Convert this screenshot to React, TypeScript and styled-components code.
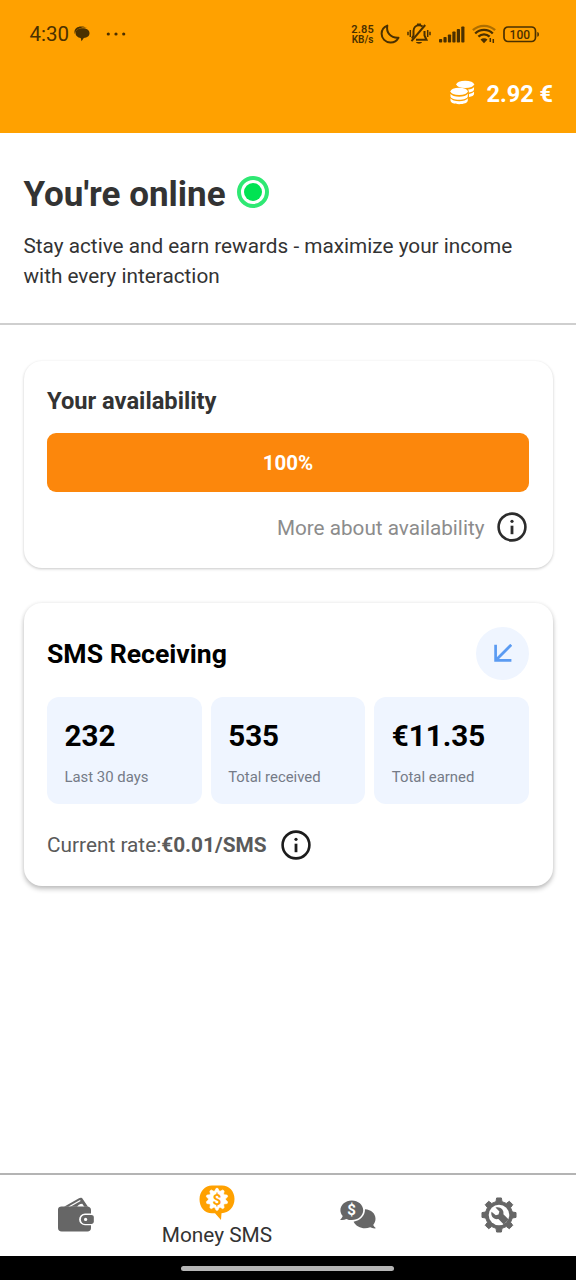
import React from "react";
import styled, { createGlobalStyle } from "styled-components";

const GlobalStyle = createGlobalStyle`
  *, *::before, *::after { box-sizing: border-box; }
  body {
    margin: 0;
    background: #fff;
    font-family: Roboto, "Liberation Sans", sans-serif;
    color: #333;
  }
  svg { display: block; flex: none; }
`;

const Screen = styled.div`
  display: flex;
  flex-direction: column;
  width: 576px;
  height: 1280px;
  overflow: hidden;
  background: #fff;
`;

const Header = styled.header`
  height: 133px;
  background: #ffa100;
`;

const StatusBar = styled.div`
  display: flex;
  justify-content: space-between;
  align-items: center;
  height: 68px;
  padding: 0 36px 0 29.5px;
  color: #4a3000;
`;

const StatusGroup = styled.div<{ $gap: number }>`
  display: flex;
  align-items: center;
  gap: ${(p) => p.$gap}px;
`;

const Clock = styled.span`
  font-size: 20.5px;
  line-height: 24px;
`;

const DotsSlot = styled.span`
  margin-left: 11px;
`;

const Speed = styled.span`
  display: flex;
  flex-direction: column;
  align-items: center;
  width: 23px;
  margin-right: -1px;
  padding-top: 2px;
  white-space: nowrap;
  font-weight: 600;
  line-height: 10px;
`;

const SpeedValue = styled.span`
  font-size: 11px;
  letter-spacing: 0.2px;
`;

const SpeedUnit = styled.span`
  font-size: 10px;
`;

const Balance = styled.div`
  display: flex;
  justify-content: flex-end;
  align-items: center;
  gap: 11px;
  height: 51px;
  padding-right: 23px;
  color: #fff;
  font-size: 23.5px;
  font-weight: 700;
  svg { margin-top: -3px; }
`;

const Intro = styled.section`
  height: 192px;
  padding: 41px 23.5px 0;
  border-bottom: 2px solid #cfcfcf;
`;

const TitleRow = styled.div`
  display: flex;
  align-items: center;
  gap: 11px;
  height: 41px;
`;

const Title = styled.h1`
  margin: 0;
  font-size: 35px;
  line-height: 41px;
  font-weight: 700;
`;

const OnlineDot = styled.span`
  display: grid;
  place-items: center;
  width: 32px;
  height: 32px;
  margin-top: -5px;
  border: 4px solid #2fe873;
  border-radius: 50%;
  &::after {
    content: "";
    width: 18px;
    height: 18px;
    border-radius: 50%;
    background: #00e352;
  }
`;

const Subtitle = styled.p`
  max-width: 510px;
  margin: 16px 0 0;
  font-size: 20.75px;
  line-height: 30px;
`;

const Content = styled.main`
  flex: 1;
  display: flex;
  flex-direction: column;
  gap: 35px;
  padding: 36px 23.5px 0;
`;

const Card = styled.section<{ $height: number; $raised?: boolean }>`
  height: ${(p) => p.$height}px;
  padding: 23.5px;
  border-radius: 18px;
  background: #fff;
  box-shadow: ${(p) =>
    p.$raised
      ? "0 3px 5px rgba(0,0,0,.24), 0 0 4px rgba(0,0,0,.07)"
      : "0 1px 3px rgba(0,0,0,.22)"};
`;

const CardTitle = styled.h2`
  margin: 0;
  font-size: 23.7px;
  line-height: 33px;
  font-weight: 700;
`;

const ProgressBar = styled.div`
  display: flex;
  align-items: center;
  justify-content: center;
  height: 59px;
  margin-top: 15px;
  padding-top: 2px;
  border-radius: 9px;
  background: #fc870c;
  color: #fff;
  font-size: 20.5px;
  font-weight: 700;
`;

const MoreRow = styled.div`
  display: flex;
  align-items: center;
  justify-content: flex-end;
  gap: 11px;
  margin-top: 19px;
  padding-right: 1.5px;
  font-size: 20.7px;
  line-height: 30px;
  color: #8c8c8c;
  span { padding-top: 2px; }
`;

const SectionHead = styled.div`
  display: flex;
  align-items: center;
  justify-content: space-between;
  height: 53px;
  color: #000;
`;

const SectionTitle = styled.h2`
  margin: 0;
  padding-top: 1px;
  font-size: 26.6px;
  font-weight: 700;
`;

const ArrowBadge = styled.div`
  display: grid;
  place-items: center;
  width: 53px;
  height: 53px;
  border-radius: 50%;
  background: #eff5ff;
`;

const Stats = styled.div`
  display: grid;
  grid-template-columns: repeat(3, 1fr);
  gap: 9px;
  margin-top: 17px;
`;

const Stat = styled.div`
  height: 107px;
  padding: 22px 17.5px 0;
  border-radius: 12px;
  background: #eff5ff;
`;

const StatValue = styled.div`
  color: #000;
  font-size: 29.6px;
  line-height: 34px;
  font-weight: 700;
`;

const StatLabel = styled.div`
  margin-top: 15px;
  color: #757b87;
  font-size: 14.9px;
  line-height: 18px;
`;

const RateRow = styled.div`
  display: flex;
  align-items: center;
  margin-top: 25px;
  color: #5a5a5a;
  font-size: 20.8px;
  line-height: 30px;
  span, strong { padding-top: 1px; }
  svg { margin-left: 13px; }
`;

const Nav = styled.nav`
  display: grid;
  grid-template-columns: repeat(4, 1fr);
  height: 83px;
  padding: 0 6px 2px 5px;
  border-top: 2px solid #b4b4b4;
  background: #fff;
`;

const NavItem = styled.div`
  display: flex;
  flex-direction: column;
  align-items: center;
  justify-content: center;
  color: #666;
`;

const NavLabel = styled.span`
  margin: 2px 0 -3px;
  color: #333;
  font-size: 20.8px;
  line-height: 26px;
`;

const GestureBar = styled.div`
  display: flex;
  justify-content: center;
  height: 24px;
  padding: 10px 1px 0 0;
  background: #000;
  &::after {
    content: "";
    width: 213px;
    height: 5px;
    border-radius: 3px;
    background: #b5b5b5;
  }
`;

/** Closed outline of a cog: `n` teeth between radius `r` and radius `R`. */
function cog(cx: number, cy: number, R: number, r: number, n: number, tip: number, base: number) {
  const pts: string[] = [];
  for (let i = 0; i < n; i++) {
    const a = (i * 2 * Math.PI) / n - Math.PI / 2;
    const corners: [number, number][] = [[-base, r], [-tip, R], [tip, R], [base, r]];
    for (const [d, rad] of corners) {
      pts.push(`${(cx + rad * Math.cos(a + d)).toFixed(2)} ${(cy + rad * Math.sin(a + d)).toFixed(2)}`);
    }
  }
  return `M${pts.join("L")}Z`;
}

const ChatIcon = () => (
  <svg width="16" height="16" viewBox="0 0 16 16" fill="currentColor">
    <path d="M.8 8C-.7 3.500 2.800.5 7 .5c3 0 5 .7 6 1.400C7 .8 1.800 3 .8 8Z" />
    <path d="M8.500 2.200c4 0 7 1.800 7 5 0 2.700-2.300 4.500-5.700 4.800L7.500 15.200 6.700 12C3.600 11.400 1.500 9.700 1.500 7.200c0-3.200 3-5 7-5Z" />
  </svg>
);

const DotsIcon = () => (
  <svg width="20" height="4" viewBox="0 0 20 4" fill="currentColor">
    <circle cx="2.300" cy="2" r="1.600" />
    <circle cx="10" cy="2" r="1.600" />
    <circle cx="17.700" cy="2" r="1.600" />
  </svg>
);

const MoonIcon = () => (
  <svg width="20" height="20" viewBox="0 0 20 20" fill="none" stroke="currentColor" strokeWidth="2" strokeLinejoin="round">
    <path d="M7.300 1.600C6 8.500 10.500 14.200 18.500 13.700 16.500 17.200 13.600 18.700 10.300 18.500 5.500 18.300 1.600 14.600 1.600 9.800 1.600 6 3.700 3 7.300 1.600Z" />
  </svg>
);

const MutedBellIcon = () => (
  <svg width="24" height="22" viewBox="0 0 24 22" fill="none" stroke="currentColor" strokeWidth="2">
    <path d="M5 15.500 6.500 12.500V8c0-3.400 2.300-5.700 5.500-5.700 1.400 0 2.700.5 3.600 1.300M17.500 8v4.500L19.500 16.800H9" />
    <path d="M4.500 18.200 18.200 2" />
    <path d="M3.300 7v7M20.700 7v7M1 8.700v3.500M23 8.700v3.500" strokeWidth="1.500" />
    <path d="M9 19h6c-.6 2.300-5.400 2.300-6 0Z" fill="currentColor" stroke="none" />
    <path d="M10 1.500h4" />
  </svg>
);

const SignalIcon = () => (
  <svg width="26" height="17" viewBox="0 0 26 17" fill="currentColor">
    {[3.5, 5.5, 8, 11, 13.5, 16].map((h, i) => (
      <rect key={h} x={i * 4.45} y={16.5 - h} width="3.200" height={h} rx=".8" />
    ))}
  </svg>
);

const WifiIcon = () => (
  <svg width="24" height="20" viewBox="0 0 24 20" fill="none" stroke="currentColor" strokeWidth="2.300">
    <path d="M.9 6.200C7 .3 17 .3 23.100 6.200" opacity=".45" />
    <path d="M3.200 9.500C8 4.600 16 4.600 20.800 9.500M6.400 12.700c3.300-3.200 7.900-3.200 11.200 0" />
    <path d="M8.500 15.600c2-1.700 5-1.700 7 0L12 19.200Z" fill="currentColor" stroke="none" />
    <path d="M18.300 14v4M21.300 15v4" strokeWidth="1.500" />
  </svg>
);

const BatteryIcon = () => (
  <svg width="37" height="17" viewBox="0 0 37 17">
    <rect x="1" y="1" width="31.500" height="14.500" rx="4" fill="none" stroke="currentColor" strokeWidth="1.700" />
    <path d="M34.300 6v4.800c2.200 0 2.200-4.800 0-4.800Z" fill="currentColor" />
    <text x="16.800" y="12.600" textAnchor="middle" fontFamily="Roboto, sans-serif" fontSize="12" fontWeight="500" fill="currentColor">
      100
    </text>
  </svg>
);

const CoinsIcon = () => (
  <svg width="25" height="25" viewBox="0 0 26 26" fill="currentColor">
    <ellipse cx="15.800" cy="4.500" rx="9.200" ry="3.800" />
    <path d="M18.800 10c3-.3 5.200-1.300 6.200-2.800v2.500c0 1.800-2.400 3-5.300 3.300 0-1.200-.3-2.200-.9-3Z" />
    <path d="M19.800 14.500c2.600-.4 4.400-1.200 5.200-2.500v2.500c0 1.700-2.300 2.800-5.200 3.100Z" />
    <ellipse cx="9.500" cy="11.800" rx="9" ry="3.800" />
    <path d="M.5 14.300c1.300 2 4.800 3 9 3s7.700-1 9-3v2.500c0 2.200-4 3.700-9 3.700s-9-1.500-9-3.700Z" />
    <path d="M.5 19c1.300 2 4.800 3 9 3s7.700-1 9-3v2.400c0 2.300-4 3.800-9 3.800s-9-1.500-9-3.800Z" />
  </svg>
);

const InfoIcon = ({ color }: { color: string }) => (
  <svg width="32" height="32" viewBox="0 0 32 32">
    <circle cx="16" cy="16" r="13.400" fill="none" stroke={color} strokeWidth="2.600" />
    <circle cx="16" cy="10.300" r="1.600" fill={color} />
    <rect x="14.600" y="14.700" width="2.800" height="8.500" fill={color} />
  </svg>
);

const ArrowIcon = () => (
  <svg width="18" height="18" viewBox="0 0 18 18" fill="none" stroke="#5b9bf2" strokeWidth="2.700">
    <path d="M17.200.8 1.800 16.200M1.600.8v15.600h15.800" />
  </svg>
);

const WalletIcon = () => (
  <svg width="36" height="35" viewBox="0 0 36 35" fill="currentColor">
    <path d="M6 9.800 21 1.300c1.600-.9 3-.6 3.900.9L30 9.800Z" />
    <path d="M10.800 10 22.300 3.500" stroke="#fff" strokeWidth="1.300" />
    <path d="M19 10c1-2 2.500-3 5.300-3.200L26.500 10Z" fill="#fff" />
    <path d="M3.500 9.500H29c2.500 0 4 1.200 4 3.500v3.500h-6a5.900 5.900 0 0 0 0 11.800h6V31c0 2.300-1.300 3.500-3.500 3.500H3.700C1.400 34.500 0 33.200 0 31V12.500c0-1.900 1.400-3 3.500-3Z" />
    <path d="M27.500 18h5.800c1.500 0 2.500.9 2.500 2.300v4.200c0 1.500-1 2.400-2.500 2.400h-5.800c-3 0-4.600-1.900-4.600-4.500S24.500 18 27.500 18Z" />
    <circle cx="27.600" cy="22.400" r="1.600" fill="#fff" />
  </svg>
);

const MoneyBubbleIcon = () => (
  <svg width="36" height="35" viewBox="0 0 36 35">
    <path d="M13 .5h10c7 0 12.500 5.800 12.500 13.500 0 8-5.500 14-13 14.200L22 35 16 28.300h-3C5.500 28.300.5 22 .5 14.200.5 6.300 6 .5 13 .5Z" fill="#ffa100" />
    <path d={cog(18, 14.3, 11, 8.6, 10, 0.08, 0.26)} fill="#fff" stroke="#fff" strokeWidth=".6" strokeLinejoin="round" />
    <text x="18" y="19.900" textAnchor="middle" fontFamily="Roboto, sans-serif" fontSize="15.500" fontWeight="700" fill="#ffa100">
      $
    </text>
  </svg>
);

const DollarChatIcon = () => (
  <svg width="36" height="29" viewBox="0 0 36 29" fill="currentColor">
    <path d="M25 9.300c6.300.4 10.500 4.300 10.500 9.500 0 2.400-.8 4.500-2.300 6.100.6 1.300 1.500 2.400 2.800 3.400-2.100.3-4 0-5.800-1-6.500 2.300-13.700.2-16.600-5.600C20.200 20.700 25 16 25 9.300Z" />
    <path d="M11.800.5c6.300 0 11.400 4.300 11.400 9.800s-5.100 9.800-11.400 9.800c-2 0-3.800-.4-5.400-1.200-2 1-4.100 1.200-6.400.8 1.400-1 2.300-2.200 2.700-3.700C1.200 14.400.4 12.500.4 10.300.4 4.800 5.500.5 11.800.5Z" />
    <text x="11.500" y="15.400" textAnchor="middle" fontFamily="Roboto, sans-serif" fontSize="15" fontWeight="700" fill="#fff">
      $
    </text>
  </svg>
);

const SettingsIcon = () => (
  <svg width="36" height="36" viewBox="0 0 36 36">
    <path d={cog(18, 18, 17.2, 13.7, 8, 0.14, 0.22)} fill="currentColor" stroke="currentColor" strokeLinejoin="round" />
    <circle cx="18" cy="18" r="10.300" fill="#fff" />
    <path
      d="M14.500 10.500c4.800-1.300 8.900 2.300 7.900 6.800l5.300 5.200-4.900 4.900-5.400-5.400c-4.500 1-8.100-2.700-6.900-7.200l4.300 3.500 2.700-.9.900-2.900Z"
      fill="currentColor"
    />
  </svg>
);

const stats = [
  { value: "232", label: "Last 30 days" },
  { value: "535", label: "Total received" },
  { value: "€11.35", label: "Total earned" },
];

export default function App() {
  return (
    <>
      <GlobalStyle />
      <Screen>
        <Header>
          <StatusBar>
            <StatusGroup $gap={5}>
              <Clock>4:30</Clock>
              <ChatIcon />
              <DotsSlot>
                <DotsIcon />
              </DotsSlot>
            </StatusGroup>
            <StatusGroup $gap={7.2}>
              <Speed>
                <SpeedValue>2.85</SpeedValue>
                <SpeedUnit>KB/s</SpeedUnit>
              </Speed>
              <MoonIcon />
              <MutedBellIcon />
              <SignalIcon />
              <WifiIcon />
              <BatteryIcon />
            </StatusGroup>
          </StatusBar>
          <Balance>
            <CoinsIcon />
            <span>2.92 €</span>
          </Balance>
        </Header>

        <Intro>
          <TitleRow>
            <Title>You're online</Title>
            <OnlineDot />
          </TitleRow>
          <Subtitle>Stay active and earn rewards - maximize your income with every interaction</Subtitle>
        </Intro>

        <Content>
          <Card $height={207}>
            <CardTitle>Your availability</CardTitle>
            <ProgressBar>100%</ProgressBar>
            <MoreRow>
              <span>More about availability</span>
              <InfoIcon color="#2c2c2c" />
            </MoreRow>
          </Card>

          <Card $height={283} $raised>
            <SectionHead>
              <SectionTitle>SMS Receiving</SectionTitle>
              <ArrowBadge>
                <ArrowIcon />
              </ArrowBadge>
            </SectionHead>
            <Stats>
              {stats.map((s) => (
                <Stat key={s.label}>
                  <StatValue>{s.value}</StatValue>
                  <StatLabel>{s.label}</StatLabel>
                </Stat>
              ))}
            </Stats>
            <RateRow>
              <span>Current rate:</span>
              <strong>€0.01/SMS</strong>
              <InfoIcon color="#1c1c1c" />
            </RateRow>
          </Card>
        </Content>

        <Nav>
          <NavItem>
            <WalletIcon />
          </NavItem>
          <NavItem>
            <MoneyBubbleIcon />
            <NavLabel>Money SMS</NavLabel>
          </NavItem>
          <NavItem>
            <DollarChatIcon />
          </NavItem>
          <NavItem>
            <SettingsIcon />
          </NavItem>
        </Nav>
        <GestureBar />
      </Screen>
    </>
  );
}
